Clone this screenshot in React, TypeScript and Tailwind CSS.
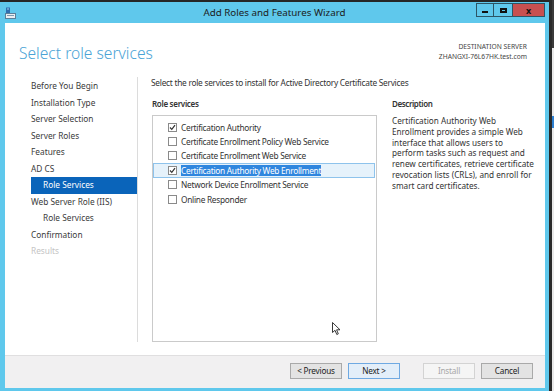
import React from 'react';

const NAV = [
  { label: 'Before You Begin', sub: false },
  { label: 'Installation Type', sub: false },
  { label: 'Server Selection', sub: false },
  { label: 'Server Roles', sub: false },
  { label: 'Features', sub: false },
  { label: 'AD CS', sub: false },
  { label: 'Role Services', sub: true, active: true },
  { label: 'Web Server Role (IIS)', sub: false },
  { label: 'Role Services', sub: true },
  { label: 'Confirmation', sub: false },
  { label: 'Results', sub: false, disabled: true },
];

const SERVICES = [
  { label: 'Certification Authority', checked: true },
  { label: 'Certificate Enrollment Policy Web Service', checked: false },
  { label: 'Certificate Enrollment Web Service', checked: false },
  { label: 'Certification Authority Web Enrollment', checked: true, selected: true },
  { label: 'Network Device Enrollment Service', checked: false },
  { label: 'Online Responder', checked: false },
];

function Checkbox({ checked }: { checked: boolean }) {
  return (
    <div className="w-[9px] h-[9px] border border-[#8a8a8a] bg-white flex items-center justify-center shrink-0">
      {checked && (
        <svg width="7" height="7" viewBox="0 0 7 7">
          <path d="M1 3.5 L2.8 5.3 L6 1.2" fill="none" stroke="#333" strokeWidth="1.2" />
        </svg>
      )}
    </div>
  );
}

function WizardIcon() {
  return (
    <svg width="11" height="12" viewBox="0 0 11 12">
      <rect x="1" y="0.5" width="4" height="6" fill="#2f6fb0" />
      <rect x="2" y="1.5" width="2" height="1" fill="#9fd3f0" />
      <rect x="0.5" y="6.5" width="10" height="5" fill="#e9eef2" stroke="#5a7f99" strokeWidth="1" />
      <rect x="2" y="8" width="7" height="1" fill="#7a9ab0" />
    </svg>
  );
}

function Button({ children, variant }: { children: React.ReactNode; variant?: 'default' | 'disabled' }) {
  const cls =
    variant === 'default'
      ? 'border-[#6fa9e2] bg-[#e3eef9] text-[#222]'
      : variant === 'disabled'
      ? 'border-[#d3d3d3] bg-[#f5f5f5] text-[#a8a8a8]'
      : 'border-[#a9a9a9] bg-[#e3e3e3] text-[#222]';
  return (
    <div className={`w-[52px] h-[16px] border flex items-center justify-center text-[8.2px] tracking-[-0.2px] ${cls}`}>
      {children}
    </div>
  );
}

export default function App() {
  return (
    <div className="relative w-[554px] h-[391px] bg-[#262626] flex overflow-hidden font-['Noto_Sans',sans-serif] text-[#333]">
      {/* Wizard window */}
      <div className="w-[549px] h-[389px] mt-[2px] bg-[#5fc8ec] flex flex-col">
        {/* Title bar */}
        <div className="h-[21px] grid grid-cols-[1fr_auto_1fr] items-start">
          <div className="pl-[5px] pt-[5px]">
            <WizardIcon />
          </div>
          <div className="pt-[4px] text-[9.8px] leading-[14px] text-[#1c1c1c]">Add Roles and Features Wizard</div>
          <div className="flex justify-end pr-[4px] pt-[1px]">
            <div className="w-[18px] h-[14px] border border-[#2c5566] flex items-end justify-center pb-[3px]">
              <div className="w-[6px] h-[2px] bg-[#111]" />
            </div>
            <div className="w-[19px] h-[14px] border border-l-0 border-[#2c5566] flex items-center justify-center">
              <div className="w-[7px] h-[5px] border-2 border-[#111]" />
            </div>
            <div className="w-[32px] h-[14px] bg-[#c75050] border border-l-0 border-[#2c5566] flex items-center justify-center text-[9px] font-bold leading-none text-[#111]">
              x
            </div>
          </div>
        </div>

        {/* Client area */}
        <div className="flex-1 ml-[5px] mr-[4px] mb-[3px] bg-white flex flex-col">
          {/* Header */}
          <div className="h-[54px] flex justify-between pl-[14px] pr-[18px]">
            <div className="pt-[21px] text-[15.6px] leading-[18px] font-light text-[#4aa3d6]">
              Select role services
            </div>
            <div className="pt-[19px] text-right text-[6.7px] leading-[10px] text-[#444]">
              <div>DESTINATION SERVER</div>
              <div>ZHANGXI-76L67HK.test.com</div>
            </div>
          </div>

          {/* Body */}
          <div className="flex-1 flex pb-[13px] text-[8.3px]">
            {/* Navigation */}
            <div className="w-[133px] border-r border-[#dcdcdc] pl-[26px] pt-[1px]">
              {NAV.map((item, i) => (
                <div
                  key={i}
                  className={`h-[16.5px] flex items-center whitespace-nowrap ${item.sub ? 'pl-[12px]' : ''} ${
                    item.active ? 'bg-[#0a64ba] text-white' : item.disabled ? 'text-[#c4c4c4]' : 'text-[#3a3a3a]'
                  }`}
                >
                  {item.label}
                </div>
              ))}
            </div>

            {/* Content */}
            <div className="flex-1 flex flex-col pl-[13px]">
              <div className="h-[12px] leading-[12px] whitespace-nowrap tracking-[-0.25px]">
                Select the role services to install for Active Directory Certificate Services
              </div>
              <div className="flex-1 flex mt-[9px]">
                <div className="w-[225px] ml-[1px] flex flex-col">
                  <div className="h-[12px] leading-[12px] font-semibold text-[8px] tracking-[-0.3px]">Role services</div>
                  <div className="flex-1 mt-[5px] border border-[#cacaca] pt-[4px] tracking-[-0.27px]">
                    {SERVICES.map((s, i) => (
                      <div
                        key={i}
                        className={`h-[14.4px] flex items-center pl-[14px] mr-[1px] whitespace-nowrap ${
                          s.selected ? 'border border-[#8ec3ec] bg-[#e6f2fb]' : 'border border-transparent'
                        }`}
                      >
                        <Checkbox checked={s.checked} />
                        <span
                          className={`ml-[4px] leading-[11px] ${s.selected ? 'bg-[#2f86de] text-white' : ''}`}
                        >
                          {s.label}
                        </span>
                      </div>
                    ))}
                  </div>
                </div>

                <div className="ml-[15px] flex flex-col">
                  <div className="h-[12px] leading-[12px] font-semibold text-[8px] tracking-[-0.4px]">Description</div>
                  <div className="mt-[6px] leading-[10.8px] whitespace-nowrap text-[8.2px]">
                    Certification Authority Web
                    <br />
                    Enrollment provides a simple Web
                    <br />
                    interface that allows users to
                    <br />
                    perform tasks such as request and
                    <br />
                    renew certificates, retrieve certificate
                    <br />
                    revocation lists (CRLs), and enroll for
                    <br />
                    smart card certificates.
                  </div>
                </div>
              </div>
            </div>
          </div>

          {/* Footer */}
          <div className="h-[33px] border-t border-[#e0dfe0] bg-[#f1f0f1] flex justify-end items-start pt-[7px] pr-[12px]">
            <Button>&lt; Previous</Button>
            <div className="ml-[6px]">
              <Button variant="default">Next &gt;</Button>
            </div>
            <div className="ml-[23px]">
              <Button variant="disabled">Install</Button>
            </div>
            <div className="ml-[6px]">
              <Button>Cancel</Button>
            </div>
          </div>
        </div>
      </div>

      {/* Background window edge */}
      <div className="w-[3px] h-full bg-[#2a2a2a]" />
      <div className="w-[2px] h-full flex flex-col bg-[#e9e9e9]">
        <div className="h-[48px] bg-[#3a3a3a]" />
        <div className="h-[68px]" />
        <div className="h-[12px] bg-[#2d7fd0]" />
      </div>

      {/* Mouse pointer */}
      <svg className="absolute left-[332px] top-[322px]" width="9" height="14" viewBox="0 0 9 14">
        <path d="M0.5 0.5 L0.5 10.5 L3 8.3 L4.8 12.5 L6.3 11.8 L4.6 7.8 L8 7.8 Z" fill="#fff" stroke="#222" strokeWidth="0.9" />
      </svg>
    </div>
  );
}
